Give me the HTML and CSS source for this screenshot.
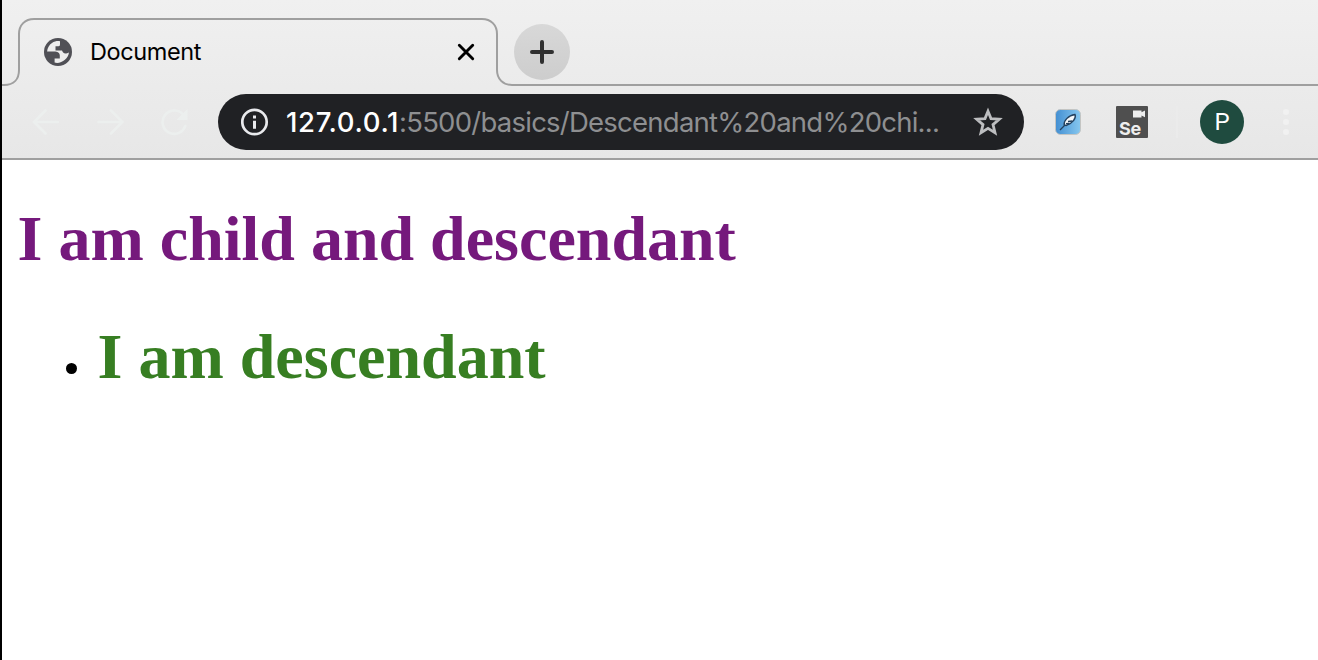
FILE: index.html
```html
<!DOCTYPE html>
<html lang="en">
<head>
<meta charset="utf-8">
<title>Document</title>
<link rel="stylesheet" href="styles.css">
</head>
<body>
<div class="window">
  <header class="chrome">
    <div class="tabstrip">
      <svg class="tab-outline" width="1316" height="86" viewBox="2 0 1316 86" fill="none" stroke="#9f9f9f" stroke-width="2"><path d="M2 85H4C14 85 19 79 19 70V34C19 25 25 19 34 19H482C491 19 497 25 497 34V70C497 79 503 85 512 85H1318"/></svg>
      <div class="tab">
        <svg class="globe" width="28" height="28" viewBox="0 0 28 28"><circle cx="14" cy="14" r="14" fill="#505056"/><path d="M16 3.300C14 2.800 10.500 3.200 8 4.900C5.200 6.700 3.300 10 3.100 13.600H10C13.500 13.600 15.800 15 15.800 17.500V20.500H10.600V24.600C16.800 26.300 24.300 21.300 25 14.300C24.300 15.200 23 15.600 21.500 15.400C19.500 15.200 18.500 14 18 12.400H11.500V8.200H14.500C15.700 8.200 16 7.500 16 6Z" fill="#eee"/></svg>
        <span class="tab-title">Document</span>
        <svg class="close" width="18" height="18" viewBox="0 0 18 18" stroke="#000" stroke-width="2.900" stroke-linecap="round"><path d="M2.300 2.300 15.700 15.700M15.700 2.300 2.300 15.700"/></svg>
      </div>
      <div class="new-tab"><svg width="24" height="24" viewBox="0 0 24 24" stroke="#303030" stroke-width="4" stroke-linecap="round"><path d="M12 2V22M2 12H22"/></svg></div>
    </div>
    <div class="toolbar">
      <nav class="nav">
        <svg width="28" height="28" viewBox="0 0 28 28"><path d="M26 14H3.500M13.500 2.500 2 14 13.500 25.500"/></svg>
        <svg width="28" height="28" viewBox="0 0 28 28"><path d="M2.500 14H25M15 2.500 26.500 14 15 25.500"/></svg>
        <svg width="28" height="28" viewBox="0 0 28 28"><path d="M23.500 7A11.700 11.700 0 1 0 25.300 18"/><path class="head" d="M27.500 1V12H16.500Z"/></svg>
      </nav>
      <div class="address">
        <svg class="info" width="28" height="28" viewBox="0 0 28 28"><circle cx="13.500" cy="14" r="12.200" fill="none" stroke="#e9eaed" stroke-width="2.700"/><path d="M12 7.500h3v3h-3zM12 12.700h3v8h-3z" fill="#e9eaed"/></svg>
        <div class="url"><span class="host">127.0.0.1</span><span class="path">:5500/basics/Descendant%20and%20chi...</span></div>
        <svg class="star" width="30" height="30" viewBox="0 0 30 30" fill="none" stroke="#bdbec0" stroke-width="2.800"><path d="M15 4.200 18 11.600 26.300 12.200 20 17.600 22 25.700 15 21.400 8 25.700 10 17.600 3.700 12.200 12 11.600Z"/></svg>
      </div>
      <svg class="quill" width="26" height="26" viewBox="0 0 26 26"><defs><linearGradient id="sky"><stop stop-color="#438fd2"/><stop offset="1" stop-color="#86c7ef"/></linearGradient></defs><rect x=".5" y=".5" width="25" height="25" rx="5" fill="url(#sky)" stroke="#c4c5c3"/><path d="M9.200 16C8.500 12 13 6.500 20 5.500C21.500 9 17.500 14.500 11 16.500Z" fill="#f5f8fa" stroke="#23415f" stroke-width="1.400"/><path d="M5 21 10 16M13 12.500 17.500 12M11 14.700 14.500 14.500" fill="none" stroke="#23415f" stroke-width="1.300"/></svg>
      <div class="selenium"><svg width="12" height="8" viewBox="0 0 12 8" fill="#eee"><path d="M0 .5H8.500V2.300L12 .5V7.300L8.500 5.500V7.500H0Z"/></svg><span>Se</span></div>
      <i class="divider"></i>
      <div class="avatar">P</div>
      <div class="menu"><i></i><i></i><i></i></div>
    </div>
  </header>
  <main class="page">
    <h1 class="child">I am child and descendant</h1>
    <ul class="list"><li><h1 class="descendant">I am descendant</h1></li></ul>
  </main>
</div>
</body>
</html>
```
FILE: styles.css
```css
* { box-sizing: border-box; }
body { margin: 0; overflow: hidden; background: #fff; }
svg { display: block; flex: none; }
.window { height: 660px; border-left: 2px solid #000; font-family: Inter, "Liberation Sans", sans-serif; }
.chrome { height: 160px; border-bottom: 2px solid #9f9f9f; background: linear-gradient(#f0f0f0, #e7e7e7); }
.tabstrip { position: relative; height: 86px; display: flex; padding: 18px 0 0 16px; }
.tab-outline { position: absolute; left: 0; top: 0; }
.tab { width: 480px; height: 68px; display: flex; align-items: center; padding: 0 23px 0 26px; }
.tab-title { flex: 1; margin-left: 18px; padding-bottom: 2px; font-size: 23.5px; letter-spacing: -.4px; color: #000; white-space: nowrap; }
.new-tab { width: 56px; height: 56px; margin: 6px 0 0 16px; border-radius: 50%; background: linear-gradient(#d8d8d8, #cdcdcd); display: grid; place-items: center; }
.toolbar { height: 72px; display: flex; align-items: center; padding-left: 30px; }
.nav { display: flex; gap: 36px; width: 186px; }
.nav path { fill: none; stroke: #ecefee; stroke-width: 2.6; stroke-linecap: round; }
.nav .head { fill: #ecefee; stroke: none; }
.address { flex: none; width: 806px; height: 56px; border-radius: 28px; background: #202124; display: flex; align-items: center; padding: 0 21px 0 23px; }
.url { flex: 1; margin-left: 17px; font-size: 27.5px; line-height: 36px; white-space: nowrap; }
.host { color: #fff; letter-spacing: .65px; font-weight: 500; }
.path { color: #8e8f91; letter-spacing: -.76px; }
.quill { margin-left: 31px; }
.selenium { flex: none; width: 32px; height: 32px; margin-left: 35px; background: #4f4f4f; border-radius: 1px; color: #eee; display: flex; flex-direction: column; padding: 4px 3px 0; font: 700 18px/21px Inter, sans-serif; letter-spacing: -.3px; }
.selenium svg { align-self: flex-end; }
.divider { width: 2px; height: 32px; margin-left: 28px; background: #ebebeb; }
.avatar { flex: none; width: 44px; height: 44px; margin-left: 22px; border-radius: 50%; background: #1f4b3f; color: #fff; font: 24px/45px Roboto, sans-serif; text-align: center; }
.menu { display: grid; gap: 4px; margin-left: 39px; }
.menu i { width: 6px; height: 6px; border-radius: 50%; background: #f1f1f1; }
.page { padding: 42px 16px 0 15.5px; font-family: "Liberation Serif", serif; font-size: 32px; }
.page h1 { margin: 0; font-size: 64px; line-height: 74px; font-weight: 700; }
.page .child { color: #75197c; }
.page .descendant { color: #377e22; }
.list { margin: 44px 0 0; padding-left: 48px; list-style: none; }
.list li { display: flex; align-items: center; gap: 21px; }
.list li::before { content: ""; width: 11px; height: 11px; border-radius: 50%; background: #000; margin-top: 22px; }
```
